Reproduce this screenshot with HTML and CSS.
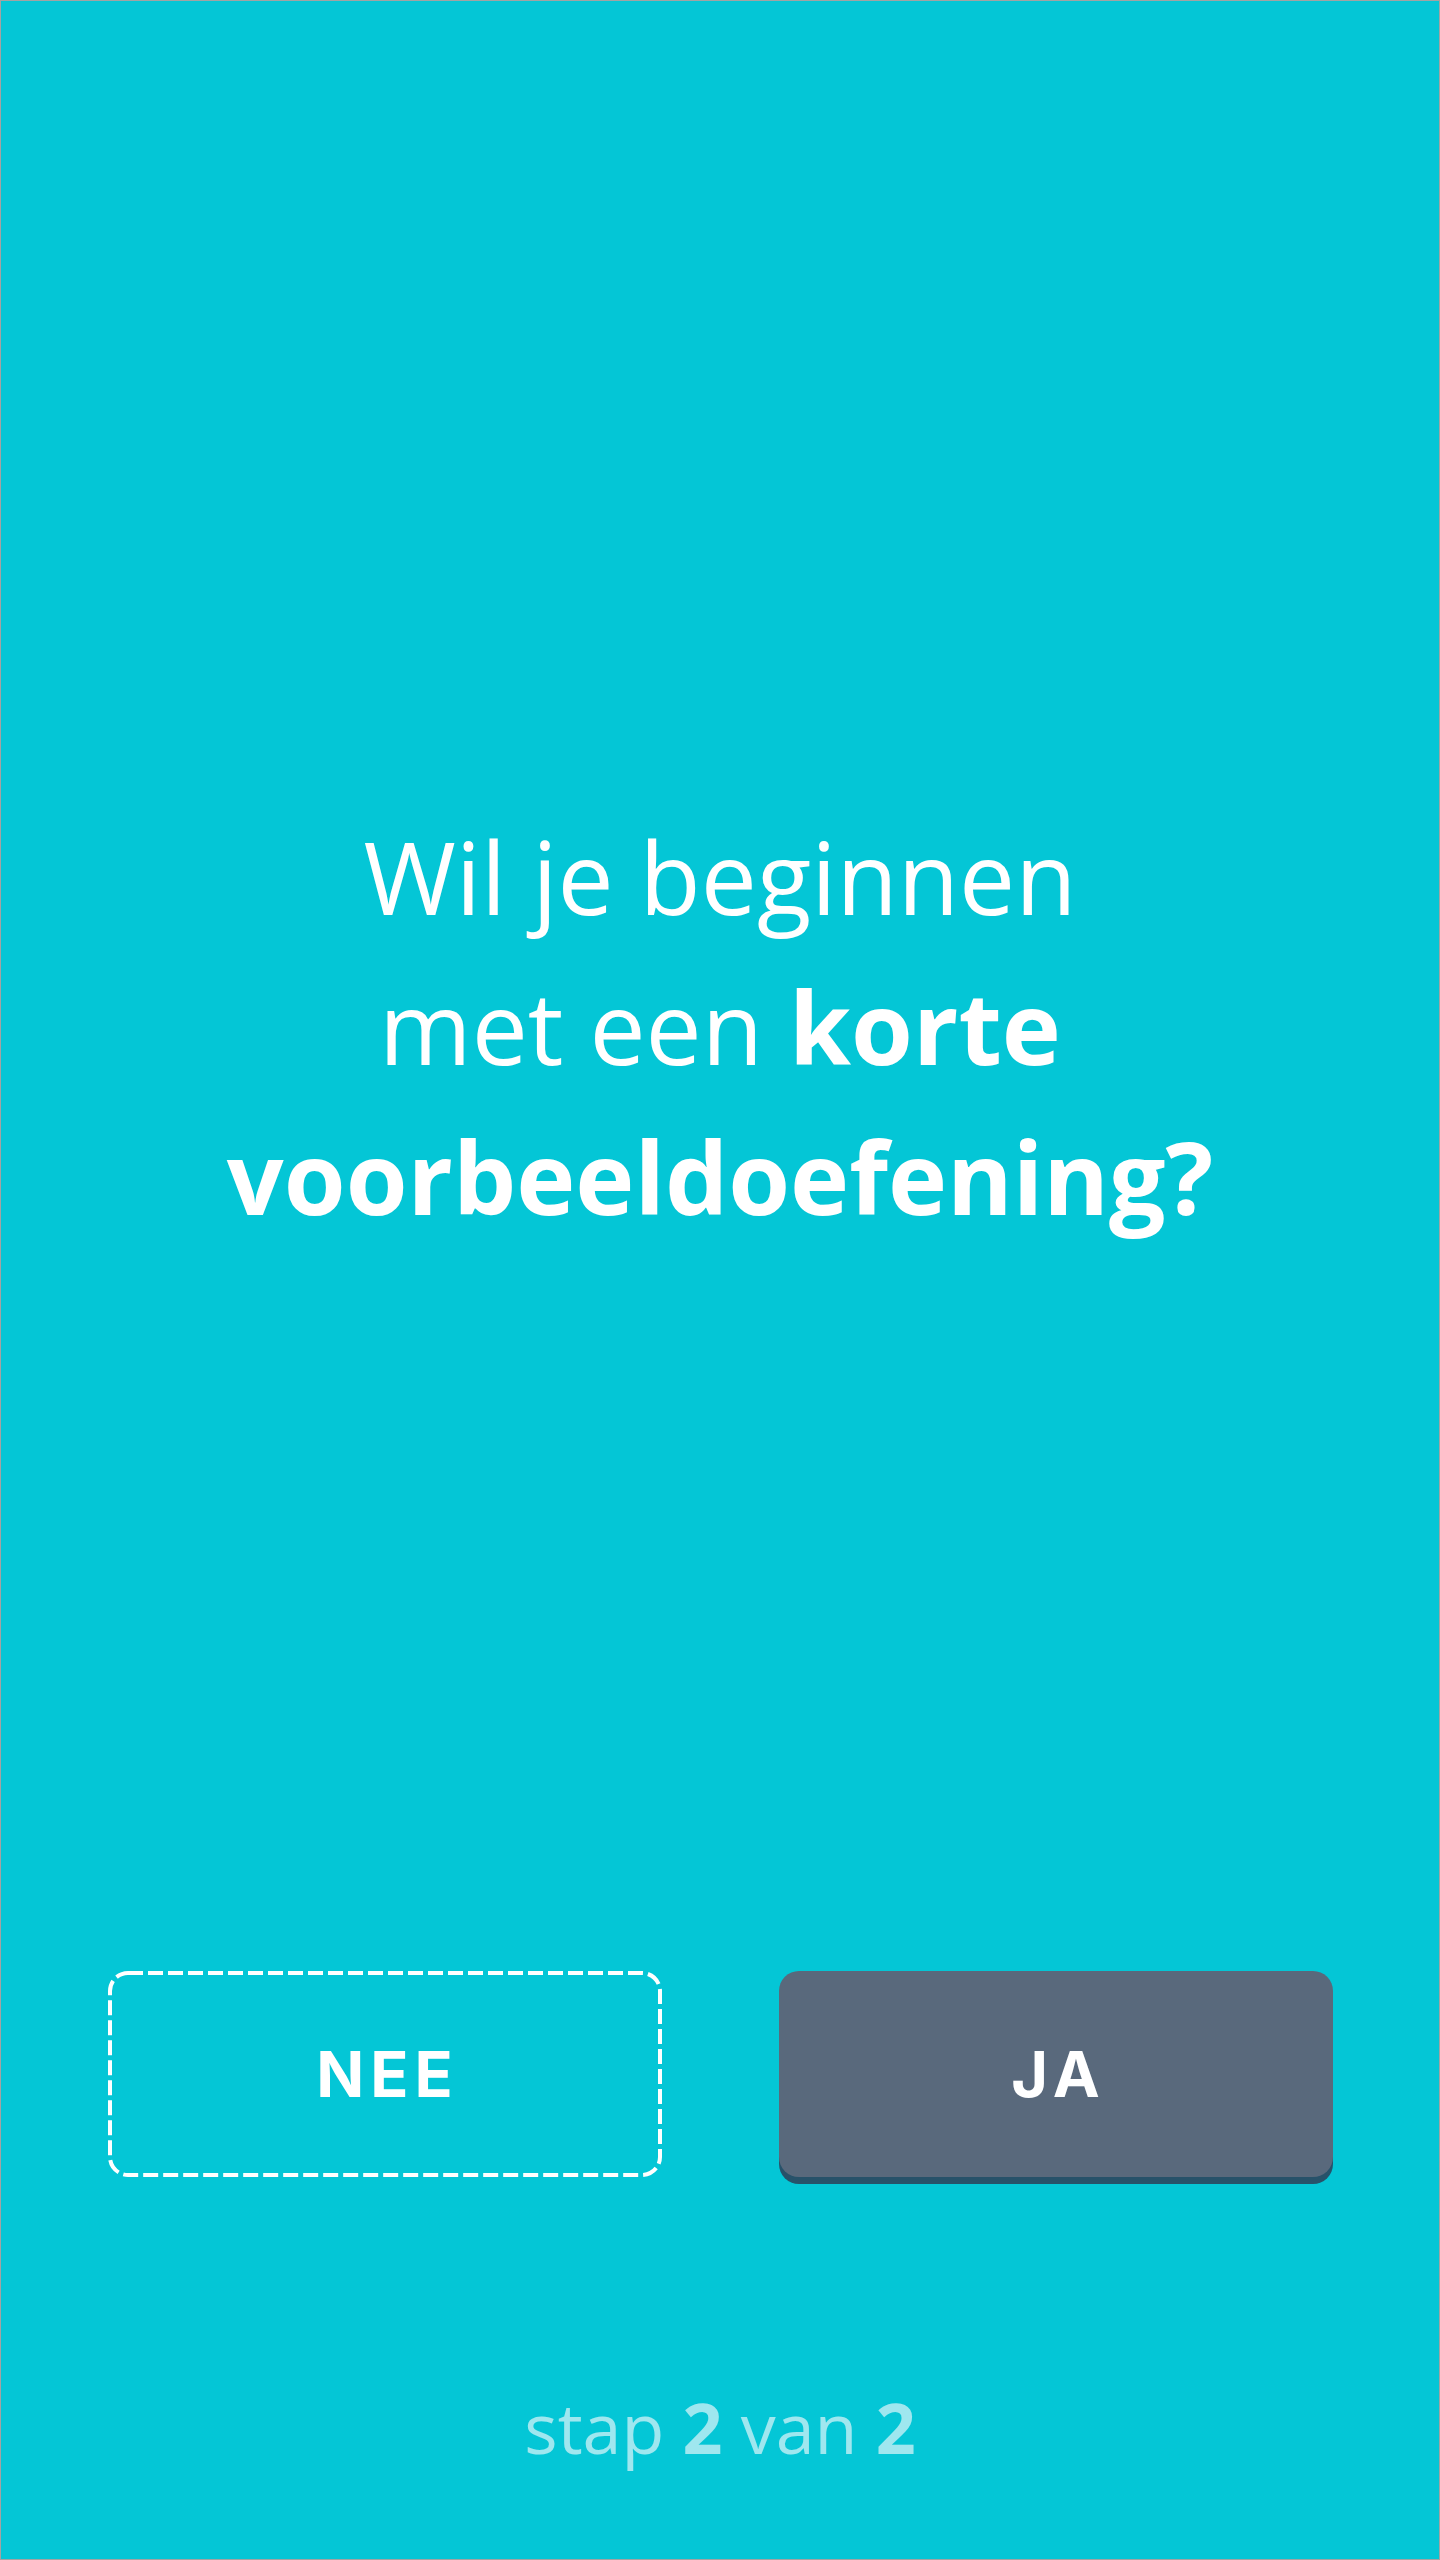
FILE: index.html
```html
<!DOCTYPE html>
<html lang="nl">
<head>
<meta charset="utf-8">
<title>Voorbeeldoefening</title>
<link rel="stylesheet" href="styles.css">
</head>
<body>
<main class="screen">
  <h1 class="question">Wil je beginnen<br>met een <strong>korte voorbeeldoefening?</strong></h1>
  <div class="choices">
    <button class="choice choice-no" type="button">
      <svg class="dash" width="554" height="206" viewBox="0 0 554 206" aria-hidden="true">
        <rect x="2" y="2" width="550" height="202" rx="18" ry="18" fill="none" stroke="#ffffff" stroke-width="4" stroke-dasharray="15 5"/>
      </svg>
      <span class="label">NEE</span>
    </button>
    <button class="choice choice-yes" type="button"><span class="label">JA</span></button>
  </div>
  <p class="step">stap <b>2</b> van <b>2</b></p>
</main>
</body>
</html>
```
FILE: styles.css
```css
html, body {
  margin: 0;
  padding: 0;
  background: #04c6d6;
}

.screen {
  box-sizing: border-box;
  width: 1440px;
  height: 2560px;
  border: 1px solid #a3a3a3;
  background: #04c6d6;
  display: flex;
  flex-direction: column;
  align-items: center;
  font-family: "Open Sans", "Noto Sans", sans-serif;
  color: #ffffff;
}

.question {
  margin: 800px 0 0;
  font-size: 100px;
  line-height: 150px;
  font-weight: 400;
  text-align: center;
  letter-spacing: 0;
}

.question strong {
  font-weight: 700;
}

.choices {
  margin-top: 720px;
  display: grid;
  grid-template-columns: 554px 554px;
  column-gap: 117px;
}

.choice {
  position: relative;
  height: 206px;
  border: 0;
  padding: 0;
  margin: 0;
  border-radius: 20px;
  background: transparent;
  color: #ffffff;
  display: flex;
  align-items: center;
  justify-content: center;
  font-family: Inter, "Liberation Sans", sans-serif;
  font-weight: 700;
  font-size: 63px;
  letter-spacing: 6px;
  cursor: pointer;
}

.choice .label {
  position: relative;
  padding-left: 6px;
}

.choice-no .dash {
  position: absolute;
  left: 0;
  top: 0;
}

.choice-yes {
  background: #59697c;
  box-shadow: 0 7px 0 #27526a;
}

.step {
  margin: 200px 0 0;
  font-size: 70px;
  line-height: 100px;
  font-weight: 400;
  color: #9fe7ef;
}

.step b {
  font-weight: 700;
}
```
